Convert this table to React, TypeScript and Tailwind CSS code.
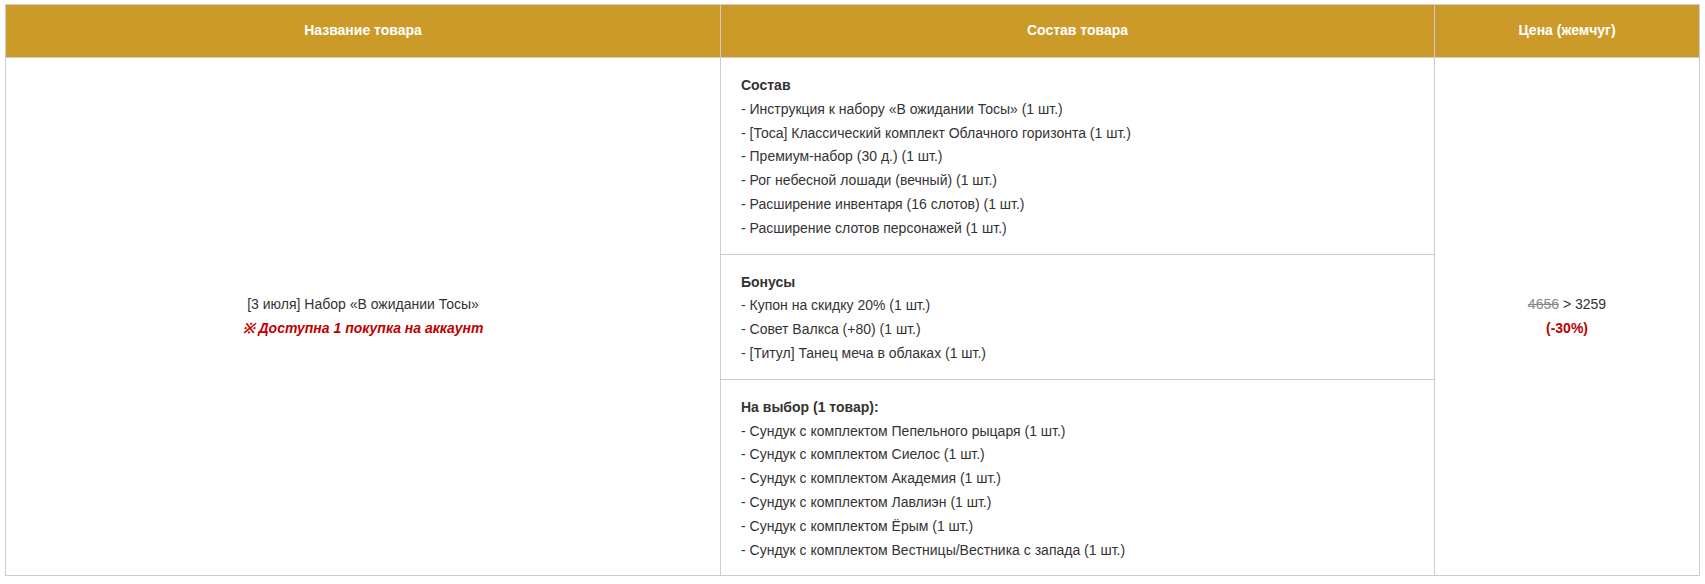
const sostav = [
  "- Инструкция к набору «В ожидании Тосы» (1 шт.)",
  "- [Тоса] Классический комплект Облачного горизонта (1 шт.)",
  "- Премиум-набор (30 д.) (1 шт.)",
  "- Рог небесной лошади (вечный) (1 шт.)",
  "- Расширение инвентаря (16 слотов) (1 шт.)",
  "- Расширение слотов персонажей (1 шт.)",
];

const bonuses = [
  "- Купон на скидку 20% (1 шт.)",
  "- Совет Валкса (+80) (1 шт.)",
  "- [Титул] Танец меча в облаках (1 шт.)",
];

const choice = [
  "- Сундук с комплектом Пепельного рыцаря (1 шт.)",
  "- Сундук с комплектом Сиелос (1 шт.)",
  "- Сундук с комплектом Академия (1 шт.)",
  "- Сундук с комплектом Лавлиэн (1 шт.)",
  "- Сундук с комплектом Ёрым (1 шт.)",
  "- Сундук с комплектом Вестницы/Вестника с запада (1 шт.)",
];

function Section({
  title,
  items,
  last,
}: {
  title: string;
  items: string[];
  last?: boolean;
}) {
  return (
    <div
      className={`px-5 pt-4 pb-[13px] ${last ? "" : "border-b border-[#cccccc]"}`}
    >
      <div className="font-bold">{title}</div>
      {items.map((item) => (
        <div key={item}>{item}</div>
      ))}
    </div>
  );
}

export default function App() {
  return (
    <div className="bg-white px-[5px] pt-1 font-['Liberation_Sans',Arial,sans-serif] text-[14px] leading-[1.7] text-[#333333]">
      <table className="w-full table-fixed border-collapse">
        <thead>
          <tr className="bg-[#cc9a29] text-white font-bold">
            <th className="h-[53px] w-[715px] border border-[#cccccc]">
              Название товара
            </th>
            <th className="w-[714px] border border-[#cccccc]">
              Состав товара
            </th>
            <th className="border border-[#cccccc]">Цена (жемчуг)</th>
          </tr>
        </thead>
        <tbody>
          <tr>
            <td className="border border-[#cccccc] text-center align-middle">
              <div>[3 июля] Набор «В ожидании Тосы»</div>
              <div className="font-bold italic text-[#c00000]">
                ※ Доступна 1 покупка на аккаунт
              </div>
            </td>
            <td className="border border-[#cccccc] p-0 align-top">
              <Section title="Состав" items={sostav} />
              <Section title="Бонусы" items={bonuses} />
              <Section title="На выбор (1 товар):" items={choice} last />
            </td>
            <td className="border border-[#cccccc] text-center align-middle">
              <div>
                <span className="text-[#888888] line-through">4656</span>
                {" > 3259"}
              </div>
              <div className="font-bold text-[#c00000]">(-30%)</div>
            </td>
          </tr>
        </tbody>
      </table>
    </div>
  );
}
